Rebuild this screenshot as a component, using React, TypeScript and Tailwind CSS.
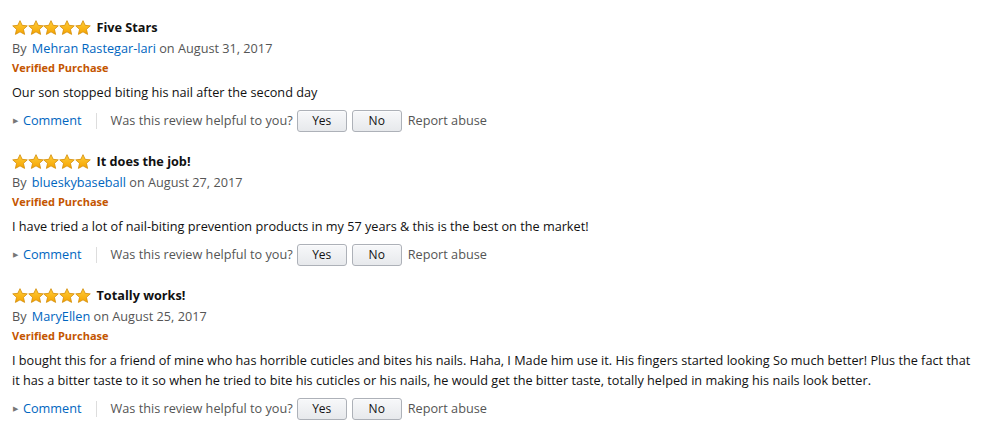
import { Fragment } from "react";

type Review = {
  title: string;
  author: string;
  date: string;
  body: string;
};

const reviews: Review[] = [
  {
    title: "Five Stars",
    author: "Mehran Rastegar-lari",
    date: "August 31, 2017",
    body: "Our son stopped biting his nail after the second day",
  },
  {
    title: "It does the job!",
    author: "blueskybaseball",
    date: "August 27, 2017",
    body: "I have tried a lot of nail-biting prevention products in my 57 years & this is the best on the market!",
  },
  {
    title: "Totally works!",
    author: "MaryEllen",
    date: "August 25, 2017",
    body: "I bought this for a friend of mine who has horrible cuticles and bites his nails. Haha, I Made him use it. His fingers started looking So much better! Plus the fact that it has a bitter taste to it so when he tried to bite his cuticles or his nails, he would get the bitter taste, totally helped in making his nails look better.",
  },
];

function Star() {
  return (
    <svg width="16" height="16" viewBox="0 0 24 24" className="-mr-[0.3px]">
      <defs>
        <linearGradient id="starFill" x1="0" y1="0" x2="0" y2="1">
          <stop offset="0" stopColor="#ffce3a" />
          <stop offset="1" stopColor="#f5a300" />
        </linearGradient>
      </defs>
      <path
        d="M12 1l3.3 7 7.6.8-5.7 5.2 1.7 7.6L12 17.8l-6.9 3.8 1.7-7.6L1.1 8.8l7.6-.8z"
        fill="url(#starFill)"
        stroke="#d38b06"
        strokeWidth="1.2"
        strokeLinejoin="round"
      />
    </svg>
  );
}

function VoteButton({ label }: { label: string }) {
  return (
    <button className="h-[22px] w-[50px] rounded-[3px] border border-[#adb1b8] bg-gradient-to-b from-[#f7f8fa] to-[#e7e9ec] text-[12px] text-[#111] shadow-[0_1px_0_rgba(255,255,255,0.6)_inset]">
      {label}
    </button>
  );
}

function ReviewItem({ review }: { review: Review }) {
  return (
    <div className="flex flex-col">
      <div className="flex items-center h-[20px]">
        <div className="flex">
          {[0, 1, 2, 3, 4].map((i) => (
            <Star key={i} />
          ))}
        </div>
        <span className="ml-[6px] text-[12.7px] font-bold text-[#111]">
          {review.title}
        </span>
      </div>
      <div className="h-[20px] leading-[20px] text-[12.7px] text-[#555]">
        By <a className="text-[#0066c0] ml-[2px]">{review.author}</a> on{" "}
        {review.date}
      </div>
      <div className="h-[20px] leading-[20px] text-[11px] font-bold text-[#c45500]">
        Verified Purchase
      </div>
      <p className="mt-[4px] leading-[20px] text-[12.7px] text-[#111]">
        {review.body}
      </p>
      <div className="mt-[8px] flex items-center h-[22px] text-[12.7px]">
        <span className="text-[#777] text-[7px] mr-[5px] ml-[1px]">▶</span>
        <a className="text-[#0066c0]">Comment</a>
        <span className="ml-[14px] mr-[14px] h-[16px] w-px bg-[#ddd]" />
        <span className="text-[#555] mr-[4px]">Was this review helpful to you?</span>
        <div className="flex gap-[5px]">
          <VoteButton label="Yes" />
          <VoteButton label="No" />
        </div>
        <a className="ml-[6px] text-[#555]">Report abuse</a>
      </div>
    </div>
  );
}

export default function App() {
  return (
    <div
      className="w-[988px] h-[439px] bg-white pl-[12px] pr-[10px] pt-[18px]"
      style={{ fontFamily: '"Open Sans", Arial, sans-serif' }}
    >
      <div className="flex flex-col gap-[20px]">
        {reviews.map((r, i) => (
          <Fragment key={i}>
            <ReviewItem review={r} />
          </Fragment>
        ))}
      </div>
    </div>
  );
}
